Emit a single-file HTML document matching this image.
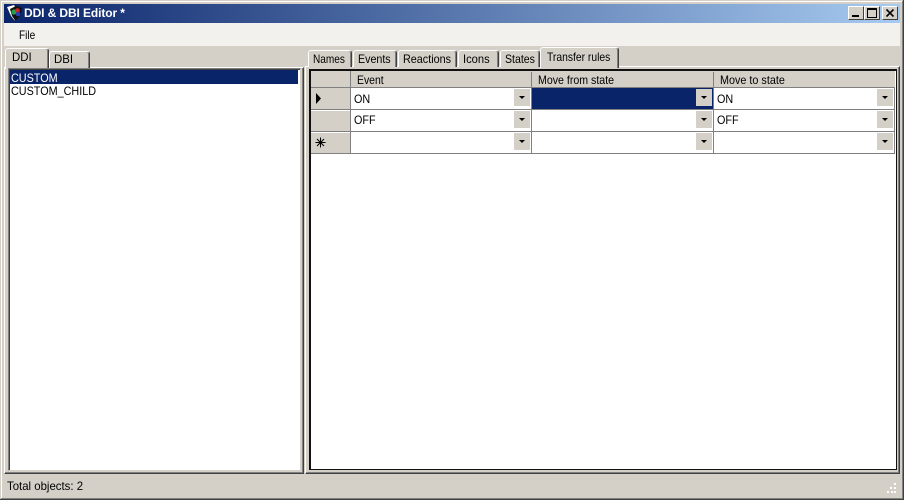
<!DOCTYPE html>
<html><head><meta charset="utf-8"><style>
html,body{margin:0;padding:0}
body{width:904px;height:500px;overflow:hidden;position:relative;background:#d4d0c8;font:12px "Liberation Sans",sans-serif;color:#000}
.a,.t,.txt,.dd{position:absolute}
.txt{white-space:nowrap;line-height:14px;transform-origin:0 0}
.t{background:#d4d0c8;border:1px solid #fff;border-right:1px solid #404040;border-bottom:0;border-radius:3px 3px 0 0;box-sizing:border-box;box-shadow:inset -1px 0 0 #808080}
.dd{width:16px;height:17px;background:#d4d0c8}
.dd:after{content:"";position:absolute;left:5px;top:7px;border:3px solid transparent;border-top:3px solid #000;border-bottom:0}
.btn{position:absolute;top:6px;width:16px;height:14px;background:#d4d0c8;box-sizing:border-box;border:1px solid;border-color:#fff #404040 #404040 #fff}
</style></head><body>
<!-- window frame -->
<div class="a" style="left:1px;top:1px;width:902px;height:1px;background:#fff"></div>
<div class="a" style="left:1px;top:1px;width:1px;height:497px;background:#fff"></div>
<div class="a" style="left:903px;top:0;width:1px;height:500px;background:#404040"></div>
<div class="a" style="left:902px;top:1px;width:1px;height:498px;background:#808080"></div>
<div class="a" style="left:0;top:499px;width:904px;height:1px;background:#404040"></div>
<div class="a" style="left:1px;top:498px;width:902px;height:1px;background:#808080"></div>
<!-- title -->
<div class="a" style="left:4px;top:4px;width:896px;height:19px;background:linear-gradient(90deg,#0a246a,#a6caf0)"></div>
<svg class="a" style="left:5px;top:4px" width="18" height="18" viewBox="0 0 18 18">
<path d="M2 3L9 1L17 4L15 12L10 17L6 12Z" fill="#111"/><path d="M2 3L9 1L10 2.500L5 5L7 12L9.500 15.500L10 17L6 12Z" fill="#fff"/>
<circle cx="9" cy="8" r="2.600" fill="#28a048"/><circle cx="12.500" cy="6.500" r="2.300" fill="#d02828"/><circle cx="13" cy="10" r="2.300" fill="#2840b0"/></svg>
<div class="txt" style="left:24px;top:6px;color:#fff;font-weight:bold;font-size:12px;letter-spacing:-.1px">DDI &amp; DBI Editor *</div>
<div class="btn" style="left:848px"><div class="a" style="left:3px;top:8px;width:7px;height:2px;background:#000"></div></div>
<div class="btn" style="left:864px"><div class="a" style="left:2px;top:1px;width:10px;height:10px;box-sizing:border-box;border:1px solid #000;border-top-width:2px"></div></div>
<div class="btn" style="left:882px"><svg class="a" style="left:0;top:0" width="14" height="12"><path d="M3.500 2.500L10.500 9.500M10.500 2.500L3.500 9.500" stroke="#000" stroke-width="1.600"/></svg></div>
<!-- menu -->
<div class="a" style="left:4px;top:23px;width:896px;height:23px;background:#f2f1ed"></div>
<div class="txt" style="left:19px;top:28px;transform:scaleX(.84)">File</div>
<!-- left page -->
<div class="a" style="left:4px;top:67px;width:300px;height:407px;box-sizing:border-box;border:1px solid;border-color:#fff #404040 #404040 #fff;box-shadow:inset -1px -1px 0 #808080"></div>
<div class="t" style="left:49px;top:51px;width:41px;height:17px"></div>
<div class="txt" style="left:54px;top:52px;transform:scaleX(.95)">DBI</div>
<div class="t" style="left:5px;top:48px;width:44px;height:21px"></div>
<div class="txt" style="left:12px;top:50px;transform:scaleX(.95)">DDI</div>
<!-- list -->
<div class="a" style="left:8px;top:68px;width:293px;height:403px;box-sizing:border-box;background:#fff;border:1px solid;border-color:#808080 #d4d0c8 #d4d0c8 #808080;box-shadow:inset 1px 1px 0 #404040"></div>
<div class="a" style="left:10px;top:70px;width:288px;height:14px;background:#0a246a"></div>
<div class="txt" style="left:11px;top:71px;color:#fff;transform:scaleX(.9)">CUSTOM</div>
<div class="txt" style="left:11px;top:84px;transform:scaleX(.9)">CUSTOM_CHILD</div>
<!-- right page -->
<div class="a" style="left:305px;top:66px;width:595px;height:408px;box-sizing:border-box;border:1px solid;border-color:#fff #404040 #404040 #fff;box-shadow:inset -1px -1px 0 #808080"></div>
<div class="t" style="left:308px;top:50px;width:44px;height:17px"></div><div class="txt" style="left:313px;top:52px;transform:scaleX(.84)">Names</div>
<div class="t" style="left:353px;top:50px;width:44px;height:17px"></div><div class="txt" style="left:358px;top:52px;transform:scaleX(.89)">Events</div>
<div class="t" style="left:398px;top:50px;width:59px;height:17px"></div><div class="txt" style="left:403px;top:52px;transform:scaleX(.9)">Reactions</div>
<div class="t" style="left:458px;top:50px;width:41px;height:17px"></div><div class="txt" style="left:463px;top:52px;transform:scaleX(.93)">Icons</div>
<div class="t" style="left:500px;top:50px;width:40px;height:17px"></div><div class="txt" style="left:505px;top:52px;transform:scaleX(.88)">States</div>
<div class="t" style="left:540px;top:47px;width:79px;height:21px"></div><div class="txt" style="left:547px;top:50px;transform:scaleX(.86)">Transfer rules</div>
<!-- grid -->
<div class="a" style="left:309px;top:69px;width:588px;height:401px;box-sizing:border-box;background:#fff;border:solid #111;border-width:2px 1px 1px 2px"></div>
<!-- header -->
<div class="a" style="left:311px;top:71px;width:584px;height:17px;background:#d4d0c8"></div>
<div class="a" style="left:350px;top:71px;width:1px;height:17px;background:#808080"></div>
<div class="a" style="left:531px;top:72px;width:1px;height:15px;background:#808080"></div>
<div class="a" style="left:713px;top:72px;width:1px;height:15px;background:#808080"></div>
<div class="txt" style="left:357px;top:73px;transform:scaleX(.87)">Event</div>
<div class="txt" style="left:538px;top:73px;transform:scaleX(.884)">Move from state</div>
<div class="txt" style="left:720px;top:73px;transform:scaleX(.9)">Move to state</div>
<!-- row headers -->
<div class="a" style="left:311px;top:88px;width:39px;height:65px;background:#d4d0c8"></div>
<svg class="a" style="left:315px;top:93px" width="8" height="12"><path d="M1 0L6 5.500L1 11Z" fill="#000"/></svg>
<svg class="a" style="left:315px;top:137px" width="11" height="11"><path d="M5.500 0.500V10.500M0.500 5.500H10.500M2 2L9 9M9 2L2 9" stroke="#000" stroke-width="1"/></svg>
<!-- selected cell -->
<div class="a" style="left:532px;top:88px;width:181px;height:21px;background:#0a246a"></div>
<!-- grid lines -->
<div class="a" style="left:311px;top:87px;width:584px;height:1px;background:#808080"></div>
<div class="a" style="left:311px;top:109px;width:584px;height:1px;background:#808080"></div>
<div class="a" style="left:311px;top:131px;width:584px;height:1px;background:#808080"></div>
<div class="a" style="left:311px;top:153px;width:584px;height:1px;background:#808080"></div>
<div class="a" style="left:350px;top:88px;width:1px;height:66px;background:#808080"></div>
<div class="a" style="left:531px;top:88px;width:1px;height:66px;background:#808080"></div>
<div class="a" style="left:713px;top:88px;width:1px;height:66px;background:#808080"></div>
<div class="a" style="left:894px;top:88px;width:1px;height:66px;background:#808080"></div>
<div class="a" style="left:311px;top:110px;width:39px;height:1px;background:#fff"></div>
<div class="a" style="left:311px;top:132px;width:39px;height:1px;background:#fff"></div>
<!-- cell text -->
<div class="txt" style="left:354px;top:92px;transform:scaleX(.9)">ON</div>
<div class="txt" style="left:354px;top:113px;transform:scaleX(.9)">OFF</div>
<div class="txt" style="left:717px;top:92px;transform:scaleX(.9)">ON</div>
<div class="txt" style="left:717px;top:113px;transform:scaleX(.9)">OFF</div>
<!-- dropdowns -->
<div class="dd" style="left:514px;top:89px"></div><div class="dd" style="left:696px;top:89px"></div><div class="dd" style="left:877px;top:89px"></div>
<div class="dd" style="left:514px;top:111px"></div><div class="dd" style="left:696px;top:111px"></div><div class="dd" style="left:877px;top:111px"></div>
<div class="dd" style="left:514px;top:133px"></div><div class="dd" style="left:696px;top:133px"></div><div class="dd" style="left:877px;top:133px"></div>
<!-- status -->
<div class="txt" style="left:7px;top:479px;transform:scaleX(.95)">Total objects: 2</div>
<svg class="a" style="left:886px;top:482px" width="12" height="12"><path d="M8 1h2v2H8zM4 5h2v2H4zM8 5h2v2H8zM1 9h2v2H1zM5 9h2v2H5zM8 9h2v2H8z" fill="#fff"/></svg>
</body></html>
